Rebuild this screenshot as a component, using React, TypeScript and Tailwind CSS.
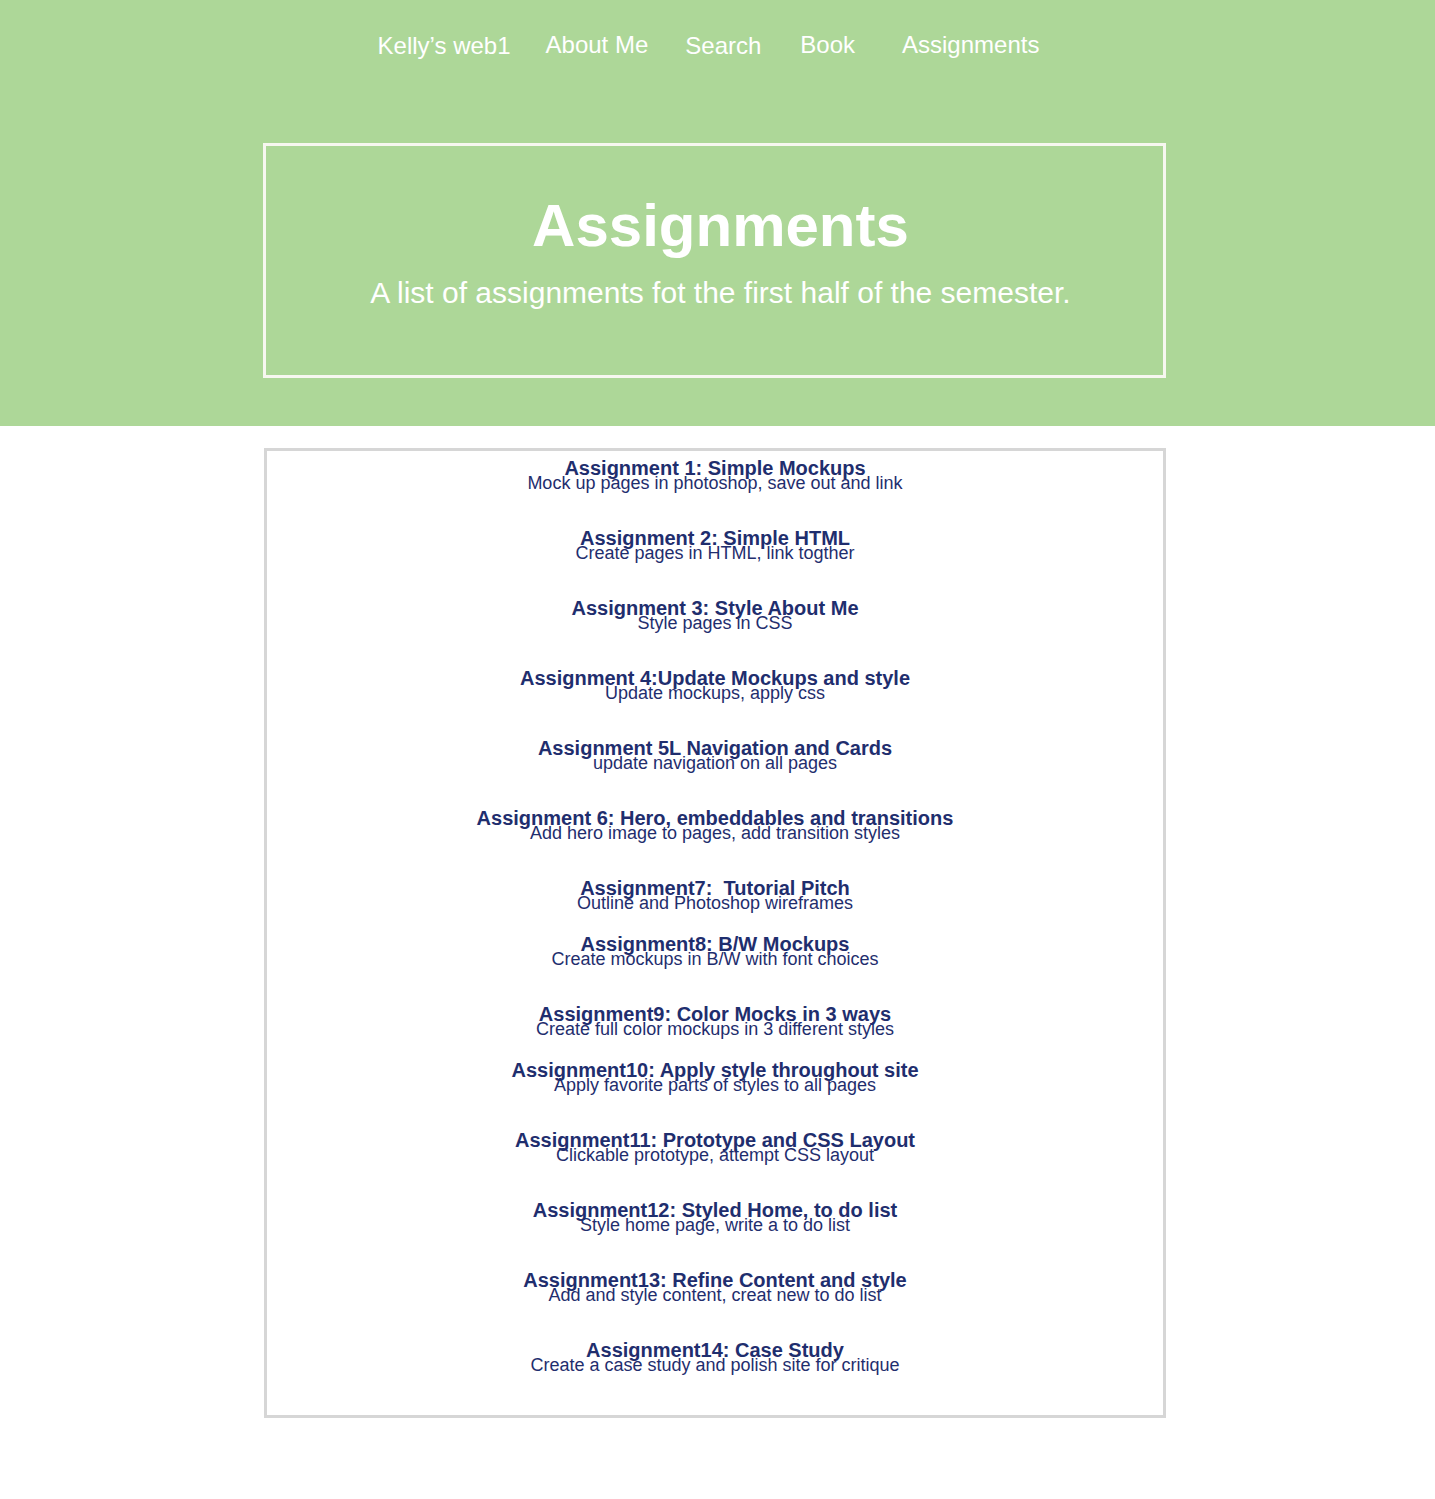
import React from "react";

const items: { title: string; desc: string; mb?: string }[] = [
  { title: "Assignment 1: Simple Mockups", desc: "Mock up pages in photoshop, save out and link" },
  { title: "Assignment 2: Simple HTML", desc: "Create pages in HTML, link togther" },
  { title: "Assignment 3: Style About Me", desc: "Style pages in CSS" },
  { title: "Assignment 4:Update Mockups and style", desc: "Update mockups, apply css" },
  { title: "Assignment 5L Navigation and Cards", desc: "update navigation on all pages" },
  { title: "Assignment 6: Hero, embeddables and transitions", desc: "Add hero image to pages, add transition styles" },
  { title: "Assignment7:\u00a0 Tutorial Pitch", desc: "Outline and Photoshop wireframes", mb: "short" },
  { title: "Assignment8: B/W Mockups", desc: "Create mockups in B/W with font choices" },
  { title: "Assignment9: Color Mocks in 3 ways", desc: "Create full color mockups in 3 different styles", mb: "short" },
  { title: "Assignment10: Apply style throughout site", desc: "Apply favorite parts of styles to all pages" },
  { title: "Assignment11: Prototype and CSS Layout", desc: "Clickable prototype, attempt CSS layout" },
  { title: "Assignment12: Styled Home, to do list", desc: "Style home page, write a to do list" },
  { title: "Assignment13: Refine Content and style", desc: "Add and style content, creat new to do list" },
  { title: "Assignment14: Case Study", desc: "Create a case study and polish site for critique" },
];

export default function App() {
  return (
    <div
      className="min-h-[1499px] bg-white"
      style={{ fontFamily: '"Liberation Sans", Arial, sans-serif' }}
    >
      <header className="bg-[#add798] pt-[33px] pb-[48px]">
        <nav className="flex h-[24px] justify-center pr-[18px] text-[24px] leading-[24px] text-white">
          <span className="relative top-[1px]">Kelly’s web1</span>
          <span className="ml-[35px]">About Me</span>
          <span className="ml-[37px] relative top-[1px]">Search</span>
          <span className="ml-[39px]">Book</span>
          <span className="ml-[47px]">Assignments</span>
        </nav>
        <section className="mt-[86px] ml-[263px] w-[903px] border-[3px] border-[#f7f7f0] pl-[12px] pt-[50px] pb-[67px] text-center text-white">
          <h1 className="text-[60px] leading-[60px] font-bold">Assignments</h1>
          <p className="mt-[22px] text-[30px] leading-[30px]">
            A list of assignments fot the first half of the semester.
          </p>
        </section>
      </header>

      <main className="mt-[22px] ml-[264px] w-[902px] border-[3px] border-[#d6d6d6] pt-[9px] pb-[3px] text-center text-[#1f2e6e]">
        {items.map((it, i) => (
          <div key={i} className={it.mb === "short" ? "mb-[25px]" : "mb-[39px]"}>
            <h3 className="text-[20px] leading-[16px] font-bold">{it.title}</h3>
            <p className="text-[18px] leading-[15px]">{it.desc}</p>
          </div>
        ))}
      </main>
    </div>
  );
}
